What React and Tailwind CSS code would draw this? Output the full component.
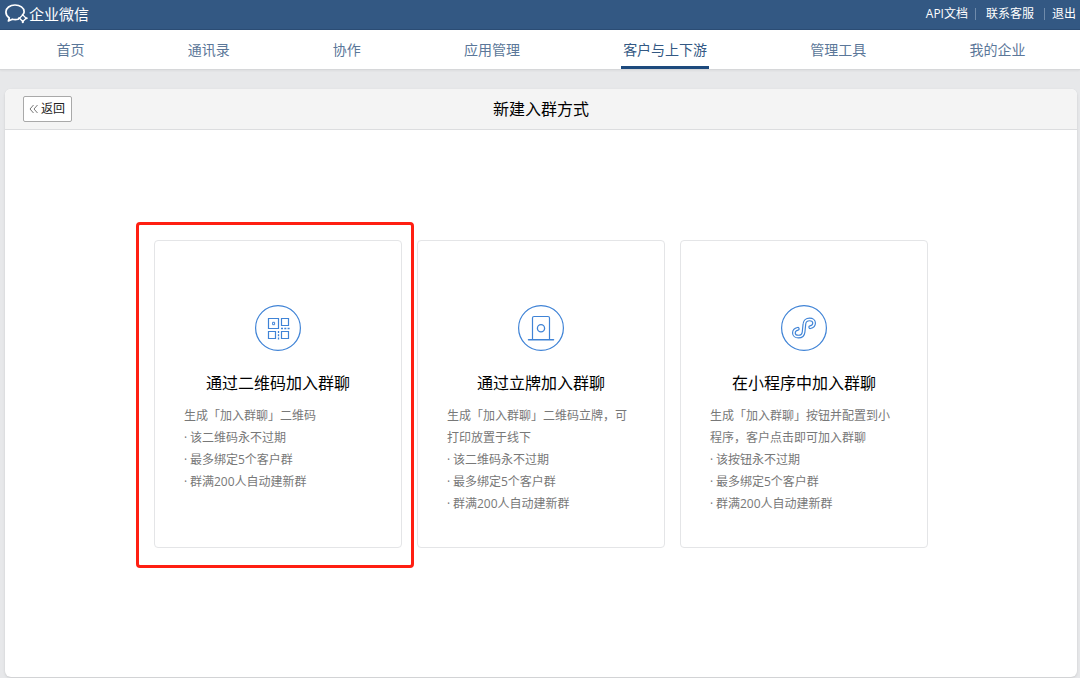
import React from 'react';

const navItems = ['首页', '通讯录', '协作', '应用管理', '客户与上下游', '管理工具', '我的企业'];
const activeNav = '客户与上下游';

const LogoIcon = () => (
    <svg width="24" height="22" viewBox="0 0 24 22" fill="none" stroke="#fff" strokeLinecap="round" strokeLinejoin="round">
        <path d="M19.800 10.300c.2-.6.3-1.200.3-1.800C20.100 4.800 16.100 2 11 2S1.900 5 1.900 9.100c0 2.500 1.300 4.500 3.400 5.900L4.400 18l3.900-1.800c2 .5 4 .5 5.900 0" strokeWidth="1.700" />
        <path d="M18.800 11.900l3.300 3.300-3.300 3.300-3.300-3.300z" strokeWidth="1.300" />
        <path d="M18.800 11.500v.4M22.400 15.200h.3M18.800 18.900v.4M15.200 15.200h-.3" strokeWidth="2.100" />
    </svg>
);

const QrCodeIcon = () => (
    <svg width="46" height="46" viewBox="0 0 46 46" fill="none" stroke="#3f83d6">
        <circle cx="23" cy="23" r="22.400" strokeWidth="1.200" />
        <path d="M13.500 13.500h10v10h-10zM26.500 13.500h7v7h-7zM13.500 26.500h7v7h-7zM26.500 26.500h7v7h-7z" strokeWidth="1.200" />
        <path d="M17.600 17.300h2v2.400h-2z" strokeWidth="1" />
        <path d="M26 23.500h9" strokeWidth="1.500" strokeDasharray="2 1.300" />
        <path d="M23.500 26v8.500" strokeWidth="1.300" strokeDasharray="2 1.200" />
    </svg>
);

const StandIcon = () => (
    <svg width="46" height="46" viewBox="0 0 46 46" fill="none" stroke="#3f83d6">
        <circle cx="23" cy="23" r="22.400" strokeWidth="1.200" />
        <path d="M14.500 34.500V13c0-1 .5-1.500 1.500-1.500h14c1 0 1.500.5 1.500 1.500v21.500" strokeWidth="1.200" />
        <path d="M10.500 34.800h25" strokeWidth="1.500" strokeLinecap="round" />
        <circle cx="23" cy="23.200" r="3.600" strokeWidth="1.300" />
    </svg>
);

const MiniProgramIcon = () => (
    <svg width="46" height="46" viewBox="0 0 46 46" fill="none" strokeLinecap="round">
        <circle cx="23" cy="23" r="22.400" stroke="#3f83d6" strokeWidth="1.200" />
        {/* wide stroke with a white core gives the hollow ribbon */}
        <path d="M29.200 22.200c2.300-.5 3.900-2.100 3.900-4.100 0-2.200-1.900-3.700-4.500-3.700-2.900 0-5 1.900-5.200 4.600l-.8 8c-.3 2.700-2.300 4.600-5.200 4.600-2.600 0-4.500-1.500-4.500-3.700 0-2 1.600-3.600 3.900-4.100" stroke="#3f83d6" strokeWidth="3.800" />
        <path d="M29.200 22.200c2.300-.5 3.900-2.100 3.900-4.100 0-2.200-1.900-3.700-4.500-3.700-2.900 0-5 1.900-5.200 4.600l-.8 8c-.3 2.700-2.300 4.600-5.200 4.600-2.600 0-4.500-1.500-4.500-3.700 0-2 1.600-3.600 3.900-4.100" stroke="#fff" strokeWidth="1.500" />
    </svg>
);

const joinMethods = [
    {
        title: '通过二维码加入群聊',
        description: '生成「加入群聊」二维码',
        points: ['该二维码永不过期', '最多绑定5个客户群', '群满200人自动建新群'],
        icon: QrCodeIcon,
        highlighted: true
    },
    {
        title: '通过立牌加入群聊',
        description: '生成「加入群聊」二维码立牌，可打印放置于线下',
        points: ['该二维码永不过期', '最多绑定5个客户群', '群满200人自动建新群'],
        icon: StandIcon
    },
    {
        title: '在小程序中加入群聊',
        description: '生成「加入群聊」按钮并配置到小程序，客户点击即可加入群聊',
        points: ['该按钮永不过期', '最多绑定5个客户群', '群满200人自动建新群'],
        icon: MiniProgramIcon
    }
];

const MethodCard = ({ method }) => {
    const Icon = method.icon;
    return (
        <div className="relative w-[248px] min-h-[308px] rounded border border-[#e4e5e7] px-[29px] pt-16 pb-8">
            {method.highlighted && (
                <div className="absolute -top-[19px] -left-[19px] -right-[13px] -bottom-[21px] rounded border-3 border-[#ff1f12] pointer-events-none"></div>
            )}
            <div className="flex justify-center">
                <Icon />
            </div>
            <h2 className="mt-5 text-base leading-6 text-black text-center whitespace-nowrap">{method.title}</h2>
            <p className="mt-[10px] text-xs leading-[22px] text-[#787878]">{method.description}</p>
            <ul className="text-xs leading-[22px] text-[#787878]">
                {method.points.map((point) => (
                    <li key={point} className="flex">
                        <span className="w-[6px]">·</span>
                        {point}
                    </li>
                ))}
            </ul>
        </div>
    );
};

const App = () => {
    return (
        <div className="min-h-screen flex flex-col bg-[#e7e8ea] font-['Open_Sans','Noto_Sans_CJK_SC',sans-serif]">
            {/* Top Bar */}
            <header className="h-[30px] flex items-center justify-between px-1 pb-[2px] bg-[#335883] border-b border-[#2b4c74] text-white">
                <a href="#" className="flex items-center gap-px text-[15px] leading-5">
                    <LogoIcon />
                    企业微信
                </a>
                <div className="flex items-center gap-[7px] text-xs leading-4">
                    <a href="#">API文档</a>
                    <span className="w-px h-3 bg-[#6f8bab]"></span>
                    <a href="#" className="px-[3px]">联系客服</a>
                    <span className="w-px h-3 bg-[#6f8bab]"></span>
                    <a href="#">退出</a>
                </div>
            </header>

            {/* Navigation */}
            <nav className="h-10 flex justify-around pl-[5px] pr-[3px] bg-white border-b border-[#d6d7d9] shadow-xs">
                {navItems.map((item) => (
                    <a
                        key={item}
                        href="#"
                        className={
                            item === activeNav
                                ? 'px-[2px] text-sm leading-10 text-[#335883] border-b-3 border-[#1d4a7d]'
                                : 'px-[2px] text-sm leading-10 text-[#5b7799]'
                        }
                    >
                        {item}
                    </a>
                ))}
            </nav>

            {/* Main Panel */}
            <main className="flex-1 flex flex-col pt-[19px] pl-[5px] pr-[3px] pb-px">
                <div className="flex-1 rounded-md bg-white shadow-sm">
                    <div className="h-[41px] grid grid-cols-[1fr_auto_1fr] items-center px-[18px] rounded-t-md bg-[#f4f4f4] border-b border-[#dcdddf]">
                        <button className="justify-self-start flex items-center gap-[3px] h-[26px] pl-[5px] pr-[6px] rounded-xs border border-[#a9a9a9] bg-white text-xs text-[#222]">
                            <svg width="9" height="10" viewBox="0 0 9 10" fill="none" stroke="#777" strokeWidth="1">
                                <path d="M4.500 1L1 5l3.500 4M8.500 1L5 5l3.500 4" />
                            </svg>
                            返回
                        </button>
                        <h1 className="text-base leading-6 text-black">新建入群方式</h1>
                    </div>
                    <div className="flex flex-wrap justify-center gap-[15px] px-4 pt-[110px] pb-16">
                        {joinMethods.map((method) => (
                            <MethodCard key={method.title} method={method} />
                        ))}
                    </div>
                </div>
            </main>
        </div>
    );
};

export default App;
